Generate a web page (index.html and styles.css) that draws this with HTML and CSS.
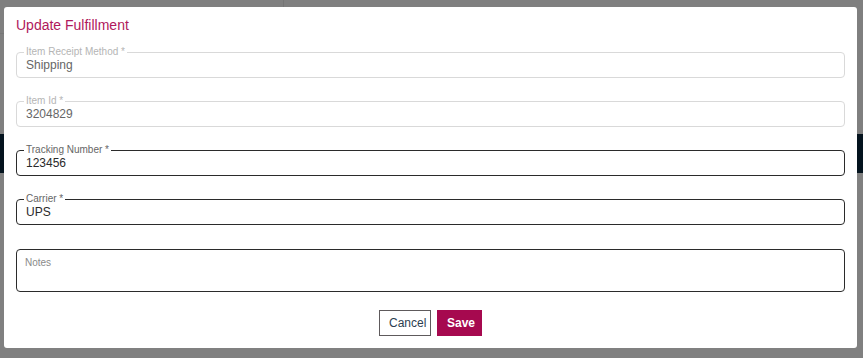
FILE: index.html
```html
<!DOCTYPE html>
<html lang="en">
<head>
<meta charset="UTF-8" />
<title>Update Fulfillment</title>
<link rel="stylesheet" href="styles.css">
</head>
<body>

<!-- page behind the overlay -->
<div class="page">
    <div class="page-top"></div>
    <div class="page-band"></div>
    <div class="page-rest"></div>
</div>

<div class="modal">
    <h2 class="modal-title">Update Fulfillment</h2>

    <fieldset class="field disabled">
        <legend>Item Receipt Method *</legend>
        <div class="field-value">Shipping</div>
    </fieldset>

    <fieldset class="field disabled">
        <legend>Item Id *</legend>
        <div class="field-value">3204829</div>
    </fieldset>

    <fieldset class="field">
        <legend>Tracking Number *</legend>
        <div class="field-value">123456</div>
    </fieldset>

    <fieldset class="field">
        <legend>Carrier *</legend>
        <div class="field-value">UPS</div>
    </fieldset>

    <div class="notes">
        <span class="placeholder">Notes</span>
    </div>

    <div class="actions">
        <button class="btn btn-cancel">Cancel</button>
        <button class="btn btn-save">Save</button>
    </div>
</div>

</body>
</html>
```

FILE: styles.css
```css
body {
    margin: 0;
    padding: 0;
    overflow: hidden;
    background-color: #808080;
    font-family: 'Liberation Sans', Arial, sans-serif;
    color: #222;
}

.page {
    height: 358px;
    display: flex;
    flex-direction: column;
}

.page-top {
    height: 134px;
    background-color: #7f7f7f;
    background-image:
        linear-gradient(#757575, #757575),
        linear-gradient(#777777, #777777);
    background-size: 1px 7px, 4px 1px;
    background-position: 283px 0, 0 33px;
    background-repeat: no-repeat;
}

.page-band {
    height: 39px;
    background-color: #04131e;
}

.page-rest {
    flex: 1;
    background-color: #808080;
}

.modal {
    position: absolute;
    top: 7px;
    left: 4px;
    width: 853px;
    height: 341px;
    box-sizing: border-box;
    padding: 9px 12px 12px;
    background: #fff;
    border-radius: 3px;
    display: flex;
    flex-direction: column;
}

.modal-title {
    margin: 0 0 13px;
    font-size: 14px;
    line-height: 18px;
    font-weight: normal;
    color: #b0185c;
}

.field {
    margin: 0 0 18px;
    padding: 1px 9px 5px;
    border: 1px solid #2b2b2b;
    border-radius: 4px;
    min-width: 0;
}

.field legend {
    margin-left: -2px;
    padding: 0 2px;
    font-size: 10px;
    line-height: 10px;
    color: #666;
}

.field-value {
    font-size: 12px;
    line-height: 14px;
    color: #2a2a2a;
}

.field.disabled {
    border-color: #d9d9d9;
}

.field.disabled legend {
    color: #b5b5b5;
}

.field.disabled .field-value {
    color: #666;
}

.notes {
    margin-top: 6px;
    height: 43px;
    box-sizing: border-box;
    border: 1px solid #2b2b2b;
    border-radius: 4px;
    padding: 2px 8px;
}

.notes .placeholder {
    font-size: 10px;
    line-height: 12px;
    color: #8a8a8a;
}

.actions {
    margin-top: 18px;
    display: flex;
    justify-content: center;
    gap: 6px;
}

.btn {
    height: 26px;
    padding: 0 9px;
    font-family: 'Liberation Sans', Arial, sans-serif;
    font-size: 12px;
    border-radius: 0;
    cursor: pointer;
}

.btn-cancel {
    width: 52px;
    background: #fff;
    border: 1px solid #5e5a5c;
    color: #2c3e50;
}

.btn-save {
    width: 45px;
    background: #a6094f;
    border: 1px solid #a6094f;
    color: #fff;
    font-weight: bold;
}
```
